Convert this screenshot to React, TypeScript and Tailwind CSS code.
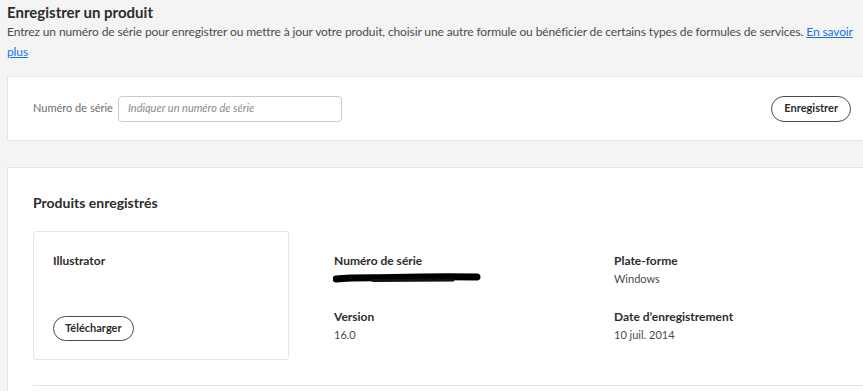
import React from 'react';

const font = { fontFamily: 'Lato, "Liberation Sans", sans-serif' };

const InfoItem: React.FC<{ label: string; children: React.ReactNode }> = ({ label, children }) => (
  <div>
    <div className="text-[12px] font-bold leading-[18px] text-[#2c2c2c]">{label}</div>
    <div className="text-[11px] leading-[18px] text-[#4b4b4b]">{children}</div>
  </div>
);

// serial number is scribbled out in the screenshot
const Redacted: React.FC = () => (
  <svg width="150" height="12" viewBox="0 0 150 12" className="mt-[2px] -ml-[1px]">
    <path
      d="M3 7 C20 5, 40 6, 60 5.5 C80 5, 110 4.5, 144 5"
      stroke="#000"
      strokeWidth="7"
      strokeLinecap="round"
      fill="none"
    />
    <path d="M40 8.5 L120 8" stroke="#111" strokeWidth="3" strokeLinecap="round" fill="none" />
  </svg>
);

const App: React.FC = () => {
  return (
    <div className="w-[863px] h-[391px] overflow-hidden bg-[#f4f4f4] text-[#2c2c2c]" style={font}>
      <div className="px-[7px] pt-[2px]">
        <h1 className="text-[15px] font-bold leading-[20px] text-[#2c2c2c]">Enregistrer un produit</h1>
        <p className="text-[12px] leading-[20px] tracking-[-0.12px] text-[#4b4b4b]">
          Entrez un numéro de série pour enregistrer ou mettre à jour votre produit, choisir une autre formule ou
          bénéficier de certains types de formules de services.{' '}
          <a href="#" className="text-[#1473e6] underline">En savoir plus</a>
        </p>
      </div>

      <div className="ml-[7px] mt-[14px] h-[65px] bg-white border border-r-0 border-[#e4e4e4] flex items-center pl-[25px] pr-[12px]">
        <span className="text-[11px] text-[#6e6e6e] mr-[5px]">Numéro de série</span>
        <div className="w-[224px] h-[26px] border border-[#cacaca] rounded-[4px] flex items-center px-[9px]">
          <span className="text-[11px] italic text-[#8a8a8a]">Indiquer un numéro de série</span>
        </div>
        <div className="flex-1" />
        <button className="h-[26px] px-[12px] rounded-full border border-[#4b4b4b] text-[11px] font-bold text-[#2c2c2c]">
          Enregistrer
        </button>
      </div>

      <div className="ml-[7px] mt-[26px] bg-white border border-r-0 border-b-0 border-[#e4e4e4] pl-[25px] pt-[25px] h-[240px]">
        <h2 className="text-[14px] font-bold leading-[20px] text-[#2c2c2c]">Produits enregistrés</h2>

        <div className="mt-[18px] flex">
          <div className="w-[256px] h-[129px] border border-[#e6e6e6] rounded-[3px] pl-[19px] pt-[20px] flex flex-col justify-between pb-[18px]">
            <div className="text-[12px] font-bold text-[#2c2c2c]">Illustrator</div>
            <button className="self-start h-[25px] px-[11px] rounded-full border border-[#4b4b4b] text-[11px] font-bold text-[#2c2c2c]">
              Télécharger
            </button>
          </div>

          <div className="ml-[45px] pt-[21px] grid grid-cols-[280px_200px] gap-y-[20px] content-start">
            <div>
              <div className="text-[12px] font-bold leading-[18px] text-[#2c2c2c]">Numéro de série</div>
              <Redacted />
            </div>
            <InfoItem label="Plate-forme">Windows</InfoItem>
            <InfoItem label="Version">16.0</InfoItem>
            <InfoItem label="Date d’enregistrement">10 juil. 2014</InfoItem>
          </div>
        </div>

        <div className="mt-[25px] border-t border-[#e4e4e4]" />
      </div>
    </div>
  );
};

export default App;
